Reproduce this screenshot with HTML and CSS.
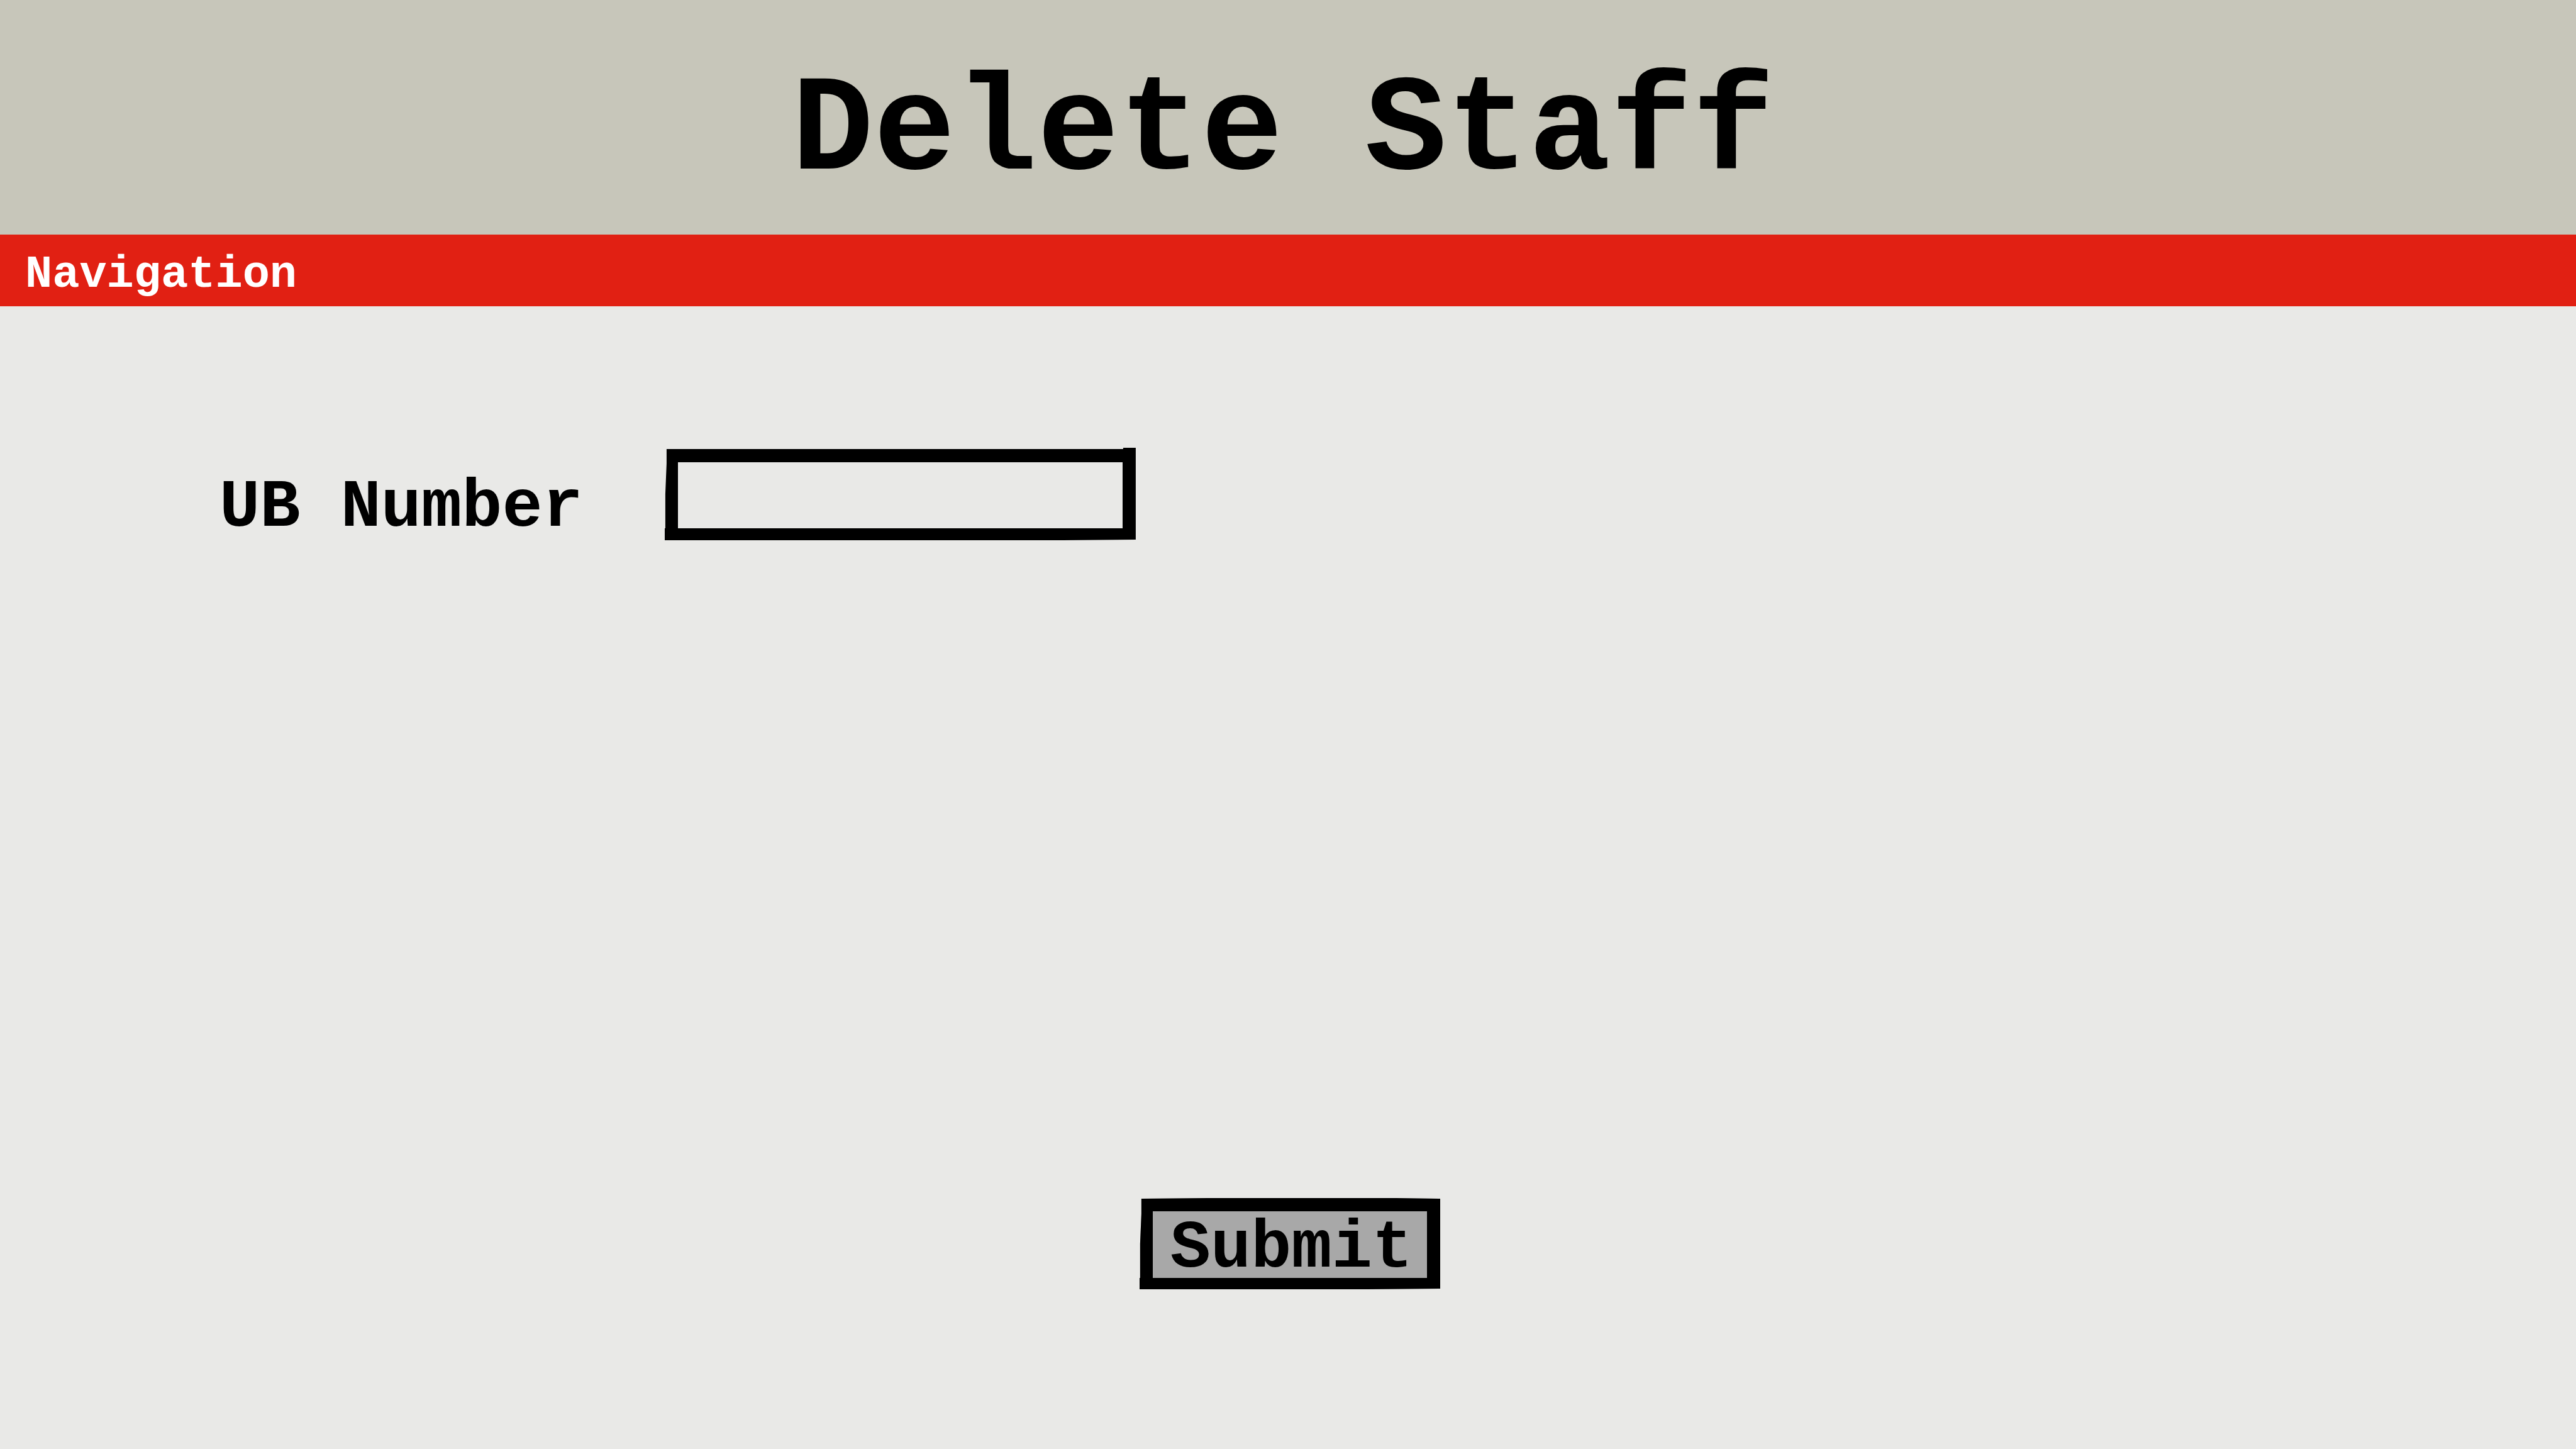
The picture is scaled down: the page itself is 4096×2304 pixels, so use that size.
FILE: index.html
```html
<!DOCTYPE html>
<html lang="en">
<head>
<meta charset="utf-8">
<meta name="viewport" content="width=device-width, initial-scale=1">
<title>Delete Staff</title>
<link rel="stylesheet" href="styles.css">
</head>
<body>
<header class="header">
  <h1 class="title">Delete Staff</h1>
</header>
<nav class="nav">
  <a class="nav-link" href="#">Navigation</a>
</nav>
<main class="main">
  <form class="form">
    <div class="field">
      <label class="label" for="ub-number">UB Number</label>
      <input class="input" id="ub-number" name="ub-number" type="text">
    </div>
    <button class="submit" type="submit">Submit</button>
  </form>
</main>
</body>
</html>
```
FILE: styles.css
```css
* {
  box-sizing: border-box;
}

body {
  margin: 0;
  min-height: 100vh;
  display: flex;
  flex-direction: column;
  background: #e9e9e7;
  color: #000;
  font-family: "Courier New", "Liberation Mono", monospace;
  font-weight: 700;
}

.header {
  padding: 87px 16px 40px 0;
  background: #c7c6ba;
  text-align: center;
}

.title {
  margin: 0;
  font-size: 217px;
  line-height: 246px;
}

.nav {
  padding: 23px 40px 9px;
  background: #e12013;
}

.nav-link {
  display: block;
  width: max-content;
  color: #fff;
  font-size: 72px;
  line-height: 82px;
  text-decoration: none;
}

.main {
  flex: 1;
  display: flex;
}

.form {
  flex: 1;
  display: flex;
  flex-direction: column;
  padding: 225px 0 254px 6px;
}

.field {
  display: flex;
  align-items: flex-end;
  gap: 130px;
  padding-left: 343px;
}

.label {
  font-size: 107px;
  line-height: 103px;
}

/* Hand-cut frames: the border edges are slightly uneven */
.input {
  width: 749px;
  height: 147px;
  padding: 0 20px;
  border: solid #000;
  border-width: 23px 21px 19px;
  border-radius: 0;
  background: #e9e9e7;
  color: inherit;
  font: inherit;
  font-size: 72px;
  outline: none;
  clip-path: polygon(3px 2px, calc(100% - 20px) 2px, calc(100% - 20px) 0, 100% 0, 100% calc(100% - 1px), calc(100% - 116px) 100%, 0 100%, 0 calc(100% - 19px), 1px calc(100% - 19px), 1px 50%, 3px 25px);
}

.submit {
  align-self: center;
  margin-top: auto;
  padding: 14px 23px 0 28px;
  border: solid #000;
  border-width: 21px 21px 18px;
  border-radius: 0;
  background: #a8a8a8;
  color: inherit;
  font: inherit;
  font-size: 107px;
  line-height: 92px;
  clip-path: polygon(3px 1px, 108px 0, calc(100% - 70px) 0, 100% 1px, 100% calc(100% - 1px), calc(100% - 116px) 100%, 0 100%, 0 calc(100% - 18px), 1px calc(100% - 18px), 1px 50%, 3px 25px);
}
```
